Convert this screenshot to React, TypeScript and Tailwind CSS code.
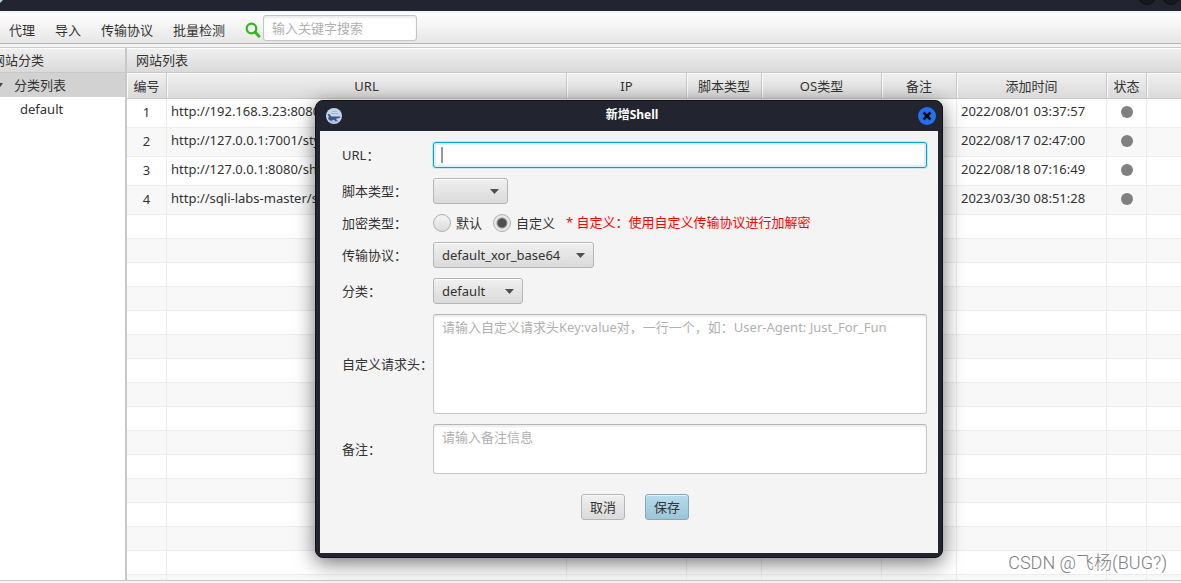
import type { ReactNode } from 'react'

type Shell = {
  id: number
  url: string
  addedAt: string
}

const MENU = ['代理', '导入', '传输协议', '批量检测']

const COLUMNS = [
  { title: '编号', width: 'w-10' },
  { title: 'URL', width: 'w-[400px]' },
  { title: 'IP', width: 'w-[120px]' },
  { title: '脚本类型', width: 'w-[75px]' },
  { title: 'OS类型', width: 'w-[120px]' },
  { title: '备注', width: 'w-[75px]' },
  { title: '添加时间', width: 'w-[150px]' },
  { title: '状态', width: 'w-10' },
  { title: '', width: 'w-auto' },
]

const SHELLS: Shell[] = [
  { id: 1, url: 'http://192.168.3.23:8080', addedAt: '2022/08/01 03:37:57' },
  { id: 2, url: 'http://127.0.0.1:7001/sty', addedAt: '2022/08/17 02:47:00' },
  { id: 3, url: 'http://127.0.0.1:8080/she', addedAt: '2022/08/18 07:16:49' },
  { id: 4, url: 'http://sqli-labs-master/sh', addedAt: '2023/03/30 08:51:28' },
]

const EMPTY_ROWS = Array.from({ length: 16 }, (_, i) => i)

const CELL = 'border-r border-b border-[#ececec] p-0 last:border-r-0'
const BUTTON = 'h-[26px] w-11 rounded-[3px] border leading-6 shadow-[inset_0_1px_0_rgba(255,255,255,0.6)]'
const AREA =
  'block w-full resize-none rounded-[3px] border border-[#c8c8c8] border-t-[#b5b5b5] bg-white px-2 py-[3px] leading-[18px] shadow-[inset_0_2px_2px_#ededed] outline-none placeholder:text-[#b0b0b0]'

function TitleBar() {
  return (
    <div className="flex h-[11px] shrink-0 justify-between overflow-hidden bg-[#22252f]">
      <svg width="6" height="6" viewBox="0 0 6 6" aria-hidden="true">
        <path d="M0 0h3L0 3z" fill="#b9cfe6" />
      </svg>
      <svg width="44" height="6" viewBox="0 0 44 6" aria-hidden="true">
        <circle cx="10" cy="-4" r="8.5" fill="#18191e" stroke="#0d0e11" />
        <circle cx="34" cy="-4" r="8.5" fill="#18191e" stroke="#0d0e11" />
      </svg>
    </div>
  )
}

function Toolbar() {
  return (
    <div className="flex h-[33px] shrink-0 items-center border-t-2 border-b border-t-[#f4f4f4] border-b-[#b4b4b4] bg-linear-to-b from-white to-[#e6e6e6] pl-[9px]">
      <nav className="flex gap-5 pt-1">
        {MENU.map((item) => (
          <button key={item} type="button" className="leading-5">
            {item}
          </button>
        ))}
      </nav>
      <label htmlFor="search" className="ml-5 pt-1" aria-label="搜索">
        <svg width="16" height="16" viewBox="0 0 16 16" fill="none" stroke="#33b61b">
          <circle cx="6.5" cy="6.5" r="4.8" strokeWidth="2.2" />
          <path d="M10 10l4 4.2" strokeWidth="2.8" strokeLinecap="round" />
        </svg>
      </label>
      <input
        id="search"
        placeholder="输入关键字搜索"
        className="ml-0.5 h-[26px] w-[154px] rounded-[3px] border border-[#c4c4c4] bg-white px-2 shadow-[inset_0_2px_2px_#ededed] outline-none placeholder:text-[#b0b0b0]"
      />
    </div>
  )
}

function PanelHeader({ children }: { children: ReactNode }) {
  return (
    <h2 className="h-[25px] border-b border-[#c8c8c8] bg-linear-to-b from-[#f0f0f0] to-[#dadada] leading-6 whitespace-nowrap shadow-[inset_0_1px_0_#fff]">
      {children}
    </h2>
  )
}

function CategoryPanel() {
  return (
    <aside className="w-[127px] shrink-0 overflow-hidden border-r-2 border-[#c8c8c8] bg-white">
      <PanelHeader>
        <span className="-ml-2">网站分类</span>
      </PanelHeader>
      <ul className="leading-6">
        <li>
          <div className="flex h-6 items-center bg-[#d2d2d2]">
            <svg width="8" height="5" viewBox="0 0 8 5" className="-ml-1 mr-2.5" aria-hidden="true">
              <path d="M0 0h7L3.5 5z" fill="#444" />
            </svg>
            分类列表
          </div>
          <ul>
            <li className="h-6 pl-5">default</li>
          </ul>
        </li>
      </ul>
    </aside>
  )
}

function ShellTable() {
  return (
    <table className="w-full table-fixed border-separate border-spacing-0 bg-white">
      <thead>
        <tr className="h-[26px]">
          {COLUMNS.map((column) => (
            <th
              key={column.title}
              className={`${column.width} border-r border-b border-[#c8c8c8] bg-linear-to-b from-[#f0f0f0] to-[#dadada] p-0 leading-6 font-normal shadow-[inset_1px_1px_0_#fafafa] last:border-r-0`}
            >
              {column.title}
            </th>
          ))}
        </tr>
      </thead>
      <tbody>
        {SHELLS.map((shell) => (
          <tr key={shell.id} className="h-[29px] even:bg-[#f8f8f8]">
            <td className={`${CELL} pb-0.5 text-center`}>{shell.id}</td>
            <td className={`${CELL} truncate pb-1 pl-1`}>{shell.url}</td>
            <td className={CELL} />
            <td className={CELL} />
            <td className={CELL} />
            <td className={CELL} />
            <td className={`${CELL} pb-1 pl-1`}>{shell.addedAt}</td>
            <td className={`${CELL} pb-0.5`}>
              <span className="mx-auto block size-3 rounded-full bg-[#808080]" />
            </td>
            <td className={CELL} />
          </tr>
        ))}
        {EMPTY_ROWS.map((row) => (
          <tr key={row} className="h-6 even:bg-[#f8f8f8]">
            {COLUMNS.map((column) => (
              <td key={column.title} className={CELL} />
            ))}
          </tr>
        ))}
      </tbody>
    </table>
  )
}

function Select({ id, value, width }: { id: string; value: string; width: string }) {
  return (
    <div className={`relative ${width}`}>
      <select
        id={id}
        className="block h-[26px] w-full appearance-none rounded-[3px] border border-[#b5b5b5] bg-linear-to-b from-[#f0f0f0] to-[#dadada] pl-2 shadow-[inset_0_1px_0_#fff] outline-none"
      >
        <option>{value}</option>
      </select>
      <svg
        width="9"
        height="5"
        viewBox="0 0 9 5"
        className="pointer-events-none absolute top-[11px] right-[9px]"
        aria-hidden="true"
      >
        <path d="M0 0h9L4.5 5z" fill="#505050" />
      </svg>
    </div>
  )
}

function Radio({ label, checked }: { label: string; checked?: boolean }) {
  return (
    <label className="flex items-center gap-[5px]">
      <input
        type="radio"
        name="encrypt"
        defaultChecked={checked}
        className="size-[18px] appearance-none rounded-full border border-[#b0b0b0] bg-linear-to-b from-[#f4f4f4] to-[#dcdcdc] checked:bg-[radial-gradient(circle,#505050_4px,#e8e8e8_6px)]"
      />
      {label}
    </label>
  )
}

function DialogLogo() {
  return (
    <svg width="16" height="16" viewBox="0 0 16 16" aria-hidden="true">
      <circle cx="8" cy="8" r="8" fill="#c3d6ea" />
      <path d="M6 3.500h5M5 5.500h7" stroke="#a5b8cf" fill="none" />
      <path
        d="M1.500 6q2.300-.5 2.800 1 .2 1.500 2.200 1.500h8l-.8 1.500-3.200.4v1.800l2.500 1-4-.3-1-1.400-2 1.200-3-.4q-1.500-2-.2-3.800z"
        fill="#3a5590"
      />
      <path d="M4 13.500q3.500 1.200 7.500 0" stroke="#8fa8cb" fill="none" />
    </svg>
  )
}

function AddShellDialog() {
  return (
    <div
      role="dialog"
      aria-label="新增Shell"
      className="absolute top-[100px] left-[315px] w-[628px] rounded-lg border border-[#111217] bg-[#22252f] px-1 pb-1 shadow-[0_5px_20px_rgba(0,0,0,0.55)]"
    >
      <div className="flex h-[30px] items-center justify-between pr-0.5 pl-1.5">
        <DialogLogo />
        <h1 className="pb-0.5 pl-1 text-xs leading-4 font-bold text-white">新增Shell</h1>
        <button type="button" aria-label="关闭">
          <svg width="18" height="18" viewBox="0 0 18 18">
            <circle cx="9" cy="9" r="9" fill="#2570f2" />
            <path d="M5.500 5.500l7 7M12.500 5.500l-7 7" stroke="#0b0c10" strokeWidth="2.600" />
          </svg>
        </button>
      </div>
      <form className="bg-[#f4f4f4] pt-[11px] pr-[11px] pb-[33px] pl-[22px]">
        <div className="grid grid-cols-[auto_1fr] items-center gap-y-2.5">
          <label htmlFor="url">URL：</label>
          <div className="relative">
            <input
              id="url"
              className="block h-[26px] w-full rounded-[3px] border border-[#039ed3] bg-white px-2 shadow-[0_0_0_1px_#c5e6f2,inset_0_0_0_2px_#dff1f8] outline-none"
            />
            <span className="absolute top-[5px] left-2 h-4 w-0.5 bg-[#999]" />
          </div>

          <label htmlFor="script">脚本类型：</label>
          <Select id="script" value="" width="w-[75px]" />

          <span>加密类型：</span>
          <div className="flex h-[18px] items-center gap-[11px]">
            <Radio label="默认" />
            <Radio label="自定义" checked />
            <p className="pb-0.5 text-[#ff0000]">* 自定义：使用自定义传输协议进行加解密</p>
          </div>

          <label htmlFor="protocol">传输协议：</label>
          <Select id="protocol" value="default_xor_base64" width="w-[161px]" />

          <label htmlFor="category">分类：</label>
          <Select id="category" value="default" width="w-[90px]" />

          <label htmlFor="headers">自定义请求头：</label>
          <textarea
            id="headers"
            placeholder="请输入自定义请求头Key:value对，一行一个，如：User-Agent: Just_For_Fun"
            className={`${AREA} h-[100px]`}
          />

          <label htmlFor="remark">备注：</label>
          <textarea id="remark" placeholder="请输入备注信息" className={`${AREA} h-[50px]`} />
        </div>
        <div className="mt-5 flex justify-center gap-5 pl-px">
          <button type="button" className={`${BUTTON} border-[#b5b5b5] bg-linear-to-b from-[#f0f0f0] to-[#dadada]`}>
            取消
          </button>
          <button type="submit" className={`${BUTTON} border-[#86a9b9] bg-linear-to-b from-[#b4dcec] to-[#9cc5d8]`}>
            保存
          </button>
        </div>
      </form>
    </div>
  )
}

export default function App() {
  return (
    <div className="relative flex h-screen flex-col overflow-hidden bg-[#f4f4f4] font-['Noto_Sans','Noto_Sans_CJK_SC',sans-serif] text-[13px] leading-[18px] text-[#333]">
      <TitleBar />
      <Toolbar />
      <main className="mt-[3px] mb-0.5 flex min-h-0 flex-1 border-y border-[#c8c8c8]">
        <CategoryPanel />
        <section className="min-w-0 flex-1 overflow-hidden">
          <PanelHeader>
            <span className="pl-[9px]">网站列表</span>
          </PanelHeader>
          <ShellTable />
        </section>
      </main>
      <AddShellDialog />
      <p className="absolute right-3.5 bottom-2 font-['Roboto','Noto_Sans_CJK_SC',sans-serif] text-lg leading-6 font-light text-[#808080] [text-shadow:1px_1px_0_#fff]">
        CSDN @飞杨(BUG?)
      </p>
    </div>
  )
}
